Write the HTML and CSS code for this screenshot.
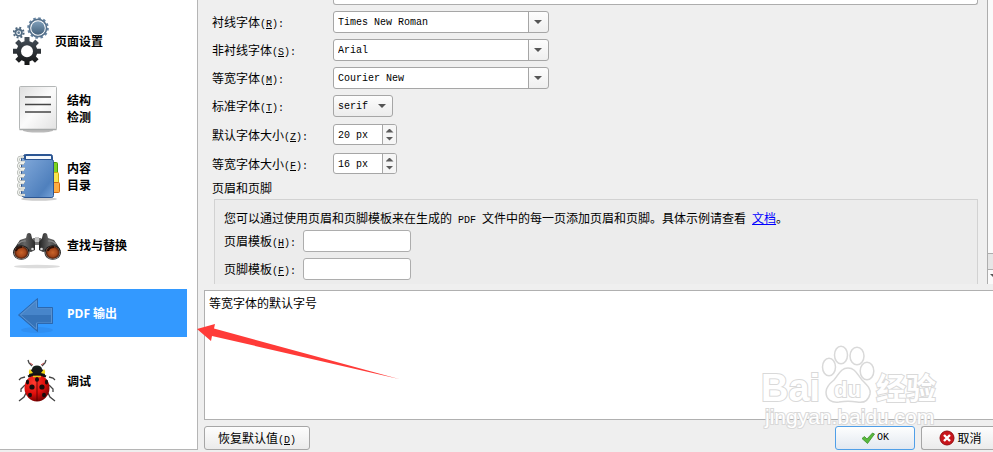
FILE: index.html
```html
<!DOCTYPE html>
<html lang="zh-CN">
<head>
<meta charset="utf-8">
<title>PDF 输出</title>
<link rel="stylesheet" href="styles.css">
</head>
<body>
<div class="dialog">
  <nav class="sidebar">
    <button class="item" type="button">
      <svg class="icon-narrow" viewBox="0 0 36 48" aria-hidden="true">
        <defs>
          <linearGradient id="dark" x1="0" y1="0" x2="0" y2="1"><stop offset="0" stop-color="#46515b"/><stop offset="1" stop-color="#151515"/></linearGradient>
          <linearGradient id="steel" x1="0" y1="0" x2="0" y2="1"><stop offset="0" stop-color="#7f9fba"/><stop offset="1" stop-color="#43607a"/></linearGradient>
        </defs>
        <circle cx="25" cy="11" r="9.8" fill="none" stroke="#6583a0" stroke-width="2" stroke-dasharray="2.6 2.53"/>
        <circle cx="25" cy="11" r="8.6" fill="#fff" stroke="#55718c" stroke-width="1.6"/>
        <circle cx="25" cy="11" r="6.8" fill="url(#steel)"/>
        <circle cx="5.7" cy="15.7" r="4.9" fill="none" stroke="#4f677d" stroke-width="2" stroke-dasharray="1.9 1.95"/>
        <circle cx="5.7" cy="15.7" r="3.2" fill="#fff" stroke="#536d84" stroke-width="1.8"/>
        <circle cx="5.7" cy="15.7" r="1.4" fill="#607b94"/>
        <path fill="url(#dark)" fill-rule="evenodd" d="M11.500 20h5v4.200l3 1.300 2.800-3 3.600 3.600-3 2.900 1.200 2.800H28v5h-3.900l-1.200 2.700 2.700 2.800-3.600 3.500-2.700-2.600-2.800 1.200V48h-5v-3.600l-2.900-1.200-2.700 2.600-3.600-3.500 2.700-2.800-1.200-2.700H0v-5h3.900l1.200-2.800-3-2.900 3.600-3.600 2.800 3 3-1.300zM14 28.200a6 6 0 1 0 0 12 6 6 0 0 0 0-12z"/>
      </svg>
      <span>页面设置</span>
    </button>
    <button class="item" type="button">
      <svg class="icon" viewBox="0 0 48 48" aria-hidden="true">
        <defs><linearGradient id="paper" x1="0" y1="0" x2="1" y2="1"><stop offset="0" stop-color="#dedede"/><stop offset=".5" stop-color="#fbfbfb"/><stop offset="1" stop-color="#e2e2e2"/></linearGradient></defs>
        <ellipse cx="25" cy="45.500" rx="15" ry="2" fill="#bbb"/>
        <rect x="6.5" y="1.5" width="37" height="43" rx="1" fill="url(#paper)" stroke="#b4b7b7"/>
        <path d="M6.500 44.500h37" stroke="#a6a9a9" stroke-width="1.500"/>
        <path d="M12 12h26M12 19.500h26M12 27h26" stroke="#454545" stroke-width="1.300"/>
      </svg>
      <span>结构<br>检测</span>
    </button>
    <button class="item" type="button">
      <svg class="icon" viewBox="0 0 48 48" aria-hidden="true">
        <defs><linearGradient id="cover" x1="0" y1="0" x2="1" y2="1"><stop offset="0" stop-color="#83aadb"/><stop offset=".75" stop-color="#4f80bd"/><stop offset="1" stop-color="#76a4da"/></linearGradient></defs>
        <ellipse cx="26" cy="46" rx="18" ry="1.800" fill="#ccc"/>
        <rect x="39" y="9.500" width="5.500" height="11" rx="1" fill="#7ed321" stroke="#4e9a06"/>
        <rect x="39" y="19.500" width="6.500" height="11" rx="1" fill="#f8e64f" stroke="#d3aa08"/>
        <rect x="39" y="29.500" width="7.500" height="10" rx="1" fill="#ffad42" stroke="#d66b10"/>
        <rect x="10.500" y="1.500" width="29" height="43" rx="2" fill="#2c5693" stroke="#2c5693"/>
        <rect x="13" y="3" width="25" height="3.500" fill="#f4f8fc"/>
        <path d="M8.500 4v37a3.500 3.500 0 0 0 3 3.500h27a2 2 0 0 0 2-2V8.500a2 2 0 0 0-2-2H12z" fill="url(#cover)" stroke="#2c5693"/>
        <path d="M12 9H8a2.500 2.500 0 0 1 0-5h3M12 15.500H8a2.500 2.500 0 0 1 0-5h3M12 22H8a2.500 2.500 0 0 1 0-5h3M12 28.500H8a2.500 2.500 0 0 1 0-5h3M12 35H8a2.500 2.500 0 0 1 0-5h3M12 42H8a2.500 2.500 0 0 1 0-5h3" fill="none" stroke="#9ca09a" stroke-width="2.600"/>
        <path d="M12 9H8a2.500 2.500 0 0 1 0-5h3M12 15.500H8a2.500 2.500 0 0 1 0-5h3M12 22H8a2.500 2.500 0 0 1 0-5h3M12 28.500H8a2.500 2.500 0 0 1 0-5h3M12 35H8a2.500 2.500 0 0 1 0-5h3M12 42H8a2.500 2.500 0 0 1 0-5h3" fill="none" stroke="#eef0ec" stroke-width="1.500"/>
      </svg>
      <span>内容<br>目录</span>
    </button>
    <button class="item" type="button">
      <svg class="icon" viewBox="0 0 48 48" aria-hidden="true">
        <defs>
          <radialGradient id="lens"><stop offset="0" stop-color="#c9642a"/><stop offset=".65" stop-color="#a4461a"/><stop offset="1" stop-color="#4a1a08"/></radialGradient>
          <linearGradient id="tube" x1="0" y1="0" x2="1" y2="0"><stop offset="0" stop-color="#222"/><stop offset=".5" stop-color="#666"/><stop offset="1" stop-color="#2b2b2b"/></linearGradient>
        </defs>
        <ellipse cx="24" cy="45.500" rx="23" ry="1.700" fill="#dcdcdc"/>
        <path d="M20 17h8v7h-8z" fill="#777"/>
        <path d="M22 16h4v5h-4z" fill="#c4c4c4"/>
        <path d="M1 28 7 19l6-2 1-4q2-2 4 0l1 4 3 4v8l-4 2-5-1z" fill="url(#tube)"/>
        <path d="M47 28l-6-9-6-2-1-4q-2-2-4 0l-1 4-3 4v8l4 2 5-1z" fill="url(#tube)"/>
        <path d="M5 23q4-4 8-3M43 23q-4-4-8-3" fill="none" stroke="#888" stroke-width="1.200"/>
        <circle cx="19.500" cy="28" r="1.300" fill="#ddd"/><circle cx="28.500" cy="28" r="1.300" fill="#ddd"/>
        <ellipse cx="8.300" cy="31.500" rx="8.200" ry="7.300" fill="#1d1d1d"/><ellipse cx="39.700" cy="31.500" rx="8.200" ry="7.300" fill="#1d1d1d"/>
        <ellipse cx="8.300" cy="31.800" rx="7.300" ry="6.500" fill="#999"/><ellipse cx="39.700" cy="31.800" rx="7.300" ry="6.500" fill="#999"/>
        <ellipse cx="8.300" cy="31.500" rx="6.800" ry="6.200" fill="url(#lens)"/><ellipse cx="39.700" cy="31.500" rx="6.800" ry="6.200" fill="url(#lens)"/>
        <path d="M3 30q1-4 6-4M35 30q1-4 6-4" fill="none" stroke="#301005" stroke-width="2"/>
      </svg>
      <span>查找与替换</span>
    </button>
    <button class="item selected" type="button">
      <svg class="icon" viewBox="0 0 48 48" aria-hidden="true">
        <ellipse cx="24" cy="41" rx="16" ry="3" fill="#308ff2"/>
        <path d="M5.500 26 24.500 9.500V18H39.500v17h-15v7.500z" fill="#4785ca"/>
        <path d="M5.500 26h34v9h-15v7.500z" fill="#3673b8"/>
        <path d="M7.500 26 23.500 12v7h15v15h-15v6z" fill="none" stroke="#5a92cf" stroke-width="1"/>
        <path d="M5.500 26 24.500 9.500V18.500H39.500v16h-15v8z" fill="none" stroke="#2b68b0"/>
      </svg>
      <span>PDF 输出</span>
    </button>
    <button class="item" type="button">
      <svg class="icon" viewBox="0 0 48 48" aria-hidden="true">
        <defs><radialGradient id="shell" cx=".38" cy=".3" r=".75"><stop offset="0" stop-color="#ff3b2f"/><stop offset=".55" stop-color="#e00f0c"/><stop offset="1" stop-color="#6d0000"/></radialGradient></defs>
        <path d="M19 9 16 6l-1-3M29 9l3-3 1-3M12 20l-4 1-2 2M36 20l4 1 2 2M13 36l-2 4-5 4M35 36l2 4 5 4M12 28l-4 4v3M36 28l4 4v3" fill="none" stroke="#444" stroke-width="1.300"/>
        <ellipse cx="24" cy="12" rx="5" ry="3.500" fill="#17201c"/>
        <path d="M16 18q0-7 8-7t8 7l-2 3H18z" fill="#17181a"/>
        <path d="M17 12q-2 2-1 5l4-1zM31 12q2 2 1 5l-4-1z" fill="#f4d71c"/>
        <path d="M20 8 17 6M28 8l3-2" stroke="#b44"/>
        <ellipse cx="24" cy="31" rx="12.500" ry="13.500" fill="url(#shell)"/>
        <path d="M15 19.500q9-4 18 0" fill="none" stroke="#111" stroke-width="2"/>
        <path d="M20 19.500h8" stroke="#e7c515" stroke-width="1.500"/>
        <path d="M24 20v24" stroke="#4a0000" stroke-width=".8"/>
        <g fill="#180c0c"><ellipse cx="24" cy="22.500" rx="2" ry="2.300"/><circle cx="19" cy="30" r="2.600"/><circle cx="29" cy="30" r="2.600"/><ellipse cx="14.500" cy="25" rx="1.600" ry="2.600"/><ellipse cx="33.500" cy="25" rx="1.600" ry="2.600"/><ellipse cx="17" cy="38" rx="2" ry="2.300"/><ellipse cx="31" cy="38" rx="2" ry="2.300"/></g>
      </svg>
      <span>调试</span>
    </button>
  </nav>

  <main class="main">
    <div class="scroller">
      <form class="form">
        <div class="grid">
          <input class="field clipped" type="text" aria-label="模板">
          <label for="serif">衬线字体<span class="lat">(<u>R</u>):</span></label>
          <span class="combo"><select id="serif"><option>Times New Roman</option></select></span>
          <label for="sans">非衬线字体<span class="lat">(<u>S</u>):</span></label>
          <span class="combo"><select id="sans"><option>Arial</option></select></span>
          <label for="mono">等宽字体<span class="lat">(<u>M</u>):</span></label>
          <span class="combo"><select id="mono"><option>Courier New</option></select></span>
          <label for="std">标准字体<span class="lat">(<u>T</u>):</span></label>
          <span class="combo small"><select id="std"><option>serif</option></select></span>
          <label for="size">默认字体大小<span class="lat">(<u>Z</u>):</span></label>
          <span class="spin"><input id="size" type="text" value="20 px"><span class="steps"><button type="button" aria-label="增大"></button><button type="button" aria-label="减小"></button></span></span>
          <label for="msize">等宽字体大小<span class="lat">(<u>F</u>):</span></label>
          <span class="spin"><input id="msize" type="text" value="16 px"><span class="steps"><button type="button" aria-label="增大"></button><button type="button" aria-label="减小"></button></span></span>
        </div>
        <div class="group-title">页眉和页脚</div>
        <div class="group">
          <p>您可以通过使用页眉和页脚模板来在生成的<span class="lat"> PDF </span>文件中的每一页添加页眉和页脚。具体示例请查看<span class="lat"> </span><a href="#">文档</a>。</p>
          <div class="grid templates">
            <label for="head">页眉模板<span class="lat">(<u>H</u>):</span></label>
            <input class="field" id="head" type="text">
            <label for="foot">页脚模板<span class="lat">(<u>F</u>):</span></label>
            <input class="field" id="foot" type="text">
          </div>
        </div>
      </form>
      <div class="scrollbar"><div class="thumb"></div><div class="down"></div></div>
    </div>
    <div class="help">等宽字体的默认字号</div>
    <div class="buttons">
      <button class="btn restore" type="button"><span>恢复默认值<span class="lat">(<u>D</u>)</span></span></button>
      <button class="btn ok" type="button">
        <svg class="mark" viewBox="0 0 14 14" aria-hidden="true"><path d="M1 7.500 3.500 5.500 6 8l5.500-6L13.500 3 6.500 12.500z" fill="#58b93d" stroke="#3c8f2b" stroke-width=".8"/></svg>
        <span class="lat">OK</span>
      </button>
      <button class="btn cancel" type="button">
        <svg class="cross" viewBox="0 0 16 16" aria-hidden="true"><circle cx="8" cy="8" r="7" fill="#c9151b" stroke="#930c10"/><path d="m5 5 6 6m0-6-6 6" stroke="#fff" stroke-width="2.400"/></svg>
        <span>取消</span>
      </button>
    </div>
  </main>

  <svg class="pointer" viewBox="0 0 202 58" aria-hidden="true"><path d="M0 5 18 0 17 4.500 202 55 15 12 14 17z" fill="#ff3b38"/></svg>
  <svg class="watermark" viewBox="0 0 184 88" aria-hidden="true">
    <g fill="#fff" stroke="#d9d9d9" stroke-width="1.500">
      <ellipse cx="86" cy="10" rx="6.500" ry="8.800"/>
      <ellipse cx="102" cy="11" rx="7" ry="8.800"/>
      <ellipse cx="74" cy="22" rx="6.500" ry="8.800"/>
      <ellipse cx="112" cy="26" rx="6.800" ry="8.800"/>
      <path d="M93 23c7 0 9 6 14 12 6 6 9 9 8 14-2 8-8 9-13 8-6-1-12-1-18 0-7 1-13-2-13-10 0-5 3-8 8-12 5-6 7-12 14-12z"/>
    </g>
    <g class="wm-text">
      <text class="wm-brand" x="6" y="56">Bai</text>
      <text class="wm-du" x="79" y="52">du</text>
      <text class="wm-cjk" x="121" y="54">经验</text>
      <text class="wm-url" x="10" y="79">jingyan.baidu.com</text>
    </g>
  </svg>
</div>
</body>
</html>
```
FILE: styles.css
```css
* { box-sizing: border-box; }

body {
  margin: 0;
  background: #efefef;
  color: #000;
  font: 12px/14px "Noto Sans CJK SC", sans-serif;
}

button, input, select { font: inherit; color: inherit; margin: 0; }

.lat, .combo select, .spin input {
  font-family: "Liberation Mono", monospace;
  font-size: 10px;
  white-space: pre;
}

.lat { line-height: 1px; }

.dialog {
  position: relative;
  display: flex;
  height: 100vh;
  overflow: hidden;
}

/* Section list */
.sidebar {
  display: flex;
  flex-direction: column;
  gap: 20px;
  flex: 0 0 198px;
  margin-bottom: 2px;
  padding: 17px 10px 0;
  background: #fff;
  border: solid #b5b5b5;
  border-width: 0 1px 1px 0;
}

.item {
  display: flex;
  align-items: center;
  gap: 6px;
  height: 48px;
  padding: 0 3px;
  border: 0;
  background: none;
  font: bold 12px/17px "Open Sans", "Noto Sans CJK SC", sans-serif;
  text-align: left;
}

.item.selected { background: #3399ff; color: #fff; }
.icon { width: 48px; height: 48px; }
.icon-narrow { width: 36px; height: 48px; }

/* Settings panel */
.main {
  display: flex;
  flex: 1;
  flex-direction: column;
  min-width: 0;
}

.scroller {
  display: flex;
  flex: 1;
  gap: 9px;
  min-height: 0;
  overflow: hidden;
}

.form { flex: 1; padding-left: 14px; }

.grid {
  display: grid;
  grid-template-columns: 121px 1fr;
  row-gap: 6px;
  align-items: center;
  justify-items: start;
}

.field {
  width: 108px;
  height: 22px;
  border: 1px solid #adadad;
  border-radius: 3px;
  background: #fff;
}

.clipped {
  grid-column: 2;
  width: 100%;
  height: 5px;
  border-top: 0;
  border-radius: 0 0 3px 3px;
}

.combo { position: relative; display: block; width: 216px; height: 22px; }

.combo select {
  appearance: none;
  display: block;
  width: 100%;
  height: 100%;
  padding: 2px 22px 0 4px;
  border: 1px solid #a6a6a6;
  border-radius: 3px;
  background: linear-gradient(#fdfdfd, #efefef) right / 19px 100% no-repeat, linear-gradient(#a6a6a6, #a6a6a6) right 19px top / 1px 100% no-repeat, #fff;
}

.combo::after {
  content: "";
  position: absolute;
  top: 9px;
  right: 7px;
  border: solid transparent;
  border-width: 4px 4px 0;
  border-top-color: #555;
  pointer-events: none;
}

.combo.small { width: 60px; }
.combo.small select { padding-right: 0; background: linear-gradient(#fdfdfd, #ececec); }

.spin {
  display: flex;
  width: 64px;
  height: 21px;
  margin: 1px 0;
  border: 1px solid #a6a6a6;
  border-radius: 3px;
  background: #fff;
  overflow: hidden;
}

.spin input { flex: 1; min-width: 0; padding: 2px 4px 0; border: 0; background: none; }

.steps {
  display: flex;
  flex: 0 0 14px;
  flex-direction: column;
  align-items: center;
  justify-content: center;
  gap: 4px;
  border-left: 1px solid #a6a6a6;
  background: #f6f6f6;
}

.steps button {
  width: 8px;
  height: 4px;
  padding: 0;
  border: 0;
  background: #5c5c5c;
  clip-path: polygon(50% 0, 100% 100%, 0 100%);
}

.steps button:last-child { clip-path: polygon(0 0, 100% 0, 50% 100%); }

.group-title { margin: 6px 0 4px; }

.group {
  height: 120px;
  margin-left: 2px;
  padding: 11px 9px;
  border: 1px solid #d2d2d2;
  background: #ececec;
}

.group p { margin: 0 0 5px; }
.group a { color: #0000ff; }
.templates { grid-template-columns: 79px 1fr; }

.scrollbar {
  display: flex;
  flex: 0 0 6px;
  flex-direction: column;
  justify-content: flex-end;
  border-left: 1px solid #adadad;
  background: #fafafa;
  overflow: hidden;
}

.thumb { height: 17px; border: solid #adadad; border-width: 1px 0; background: #e6e6e6; }
.down { height: 14px; }

.down::before {
  content: "";
  display: block;
  width: 10px;
  margin: 4px 0 0 2px;
  border: solid transparent;
  border-width: 5px 5px 0;
  border-top-color: #555;
}

.help {
  height: 130px;
  margin: 6px 0 6px 6px;
  padding: 5px 4px;
  border: solid #b0b0b0;
  border-width: 1px 0 1px 1px;
  background: #fff;
}

.buttons { display: flex; gap: 6px; padding: 0 0 2px 6px; }

.btn {
  display: flex;
  align-items: center;
  justify-content: center;
  gap: 2px;
  height: 24px;
  padding: 0;
  border: 1px solid #a6a6a6;
  border-radius: 3px;
  background: linear-gradient(#fdfdfd, #ebebeb);
}

.restore { width: 106px; margin-right: auto; }
.ok { width: 80px; border-color: #4f9fe8; background: linear-gradient(#fdfefe, #e2e8f0); }
.ok .lat { line-height: 10px; }

.cancel {
  width: 72px;
  padding-left: 6px;
  border-right: 0;
  border-radius: 3px 0 0 3px;
}

.mark { width: 14px; height: 14px; }
.cross { width: 16px; height: 16px; }

/* Overlays */
.pointer { position: absolute; top: 324px; left: 197px; width: 202px; height: 58px; pointer-events: none; }

.watermark {
  position: absolute;
  right: 54px;
  bottom: 19px;
  width: 184px;
  height: 88px;
  pointer-events: none;
}

.wm-text {
  fill: #fff;
  stroke: #d9d9d9;
  stroke-width: 2px;
  paint-order: stroke;
  font-family: "Liberation Sans", "Noto Sans CJK SC", sans-serif;
}

.wm-brand { font-size: 38px; font-weight: bold; }
.wm-du { font-size: 22px; font-weight: bold; }
.wm-cjk { font-size: 30px; font-weight: bold; }
.wm-url { font-size: 21px; }
```
